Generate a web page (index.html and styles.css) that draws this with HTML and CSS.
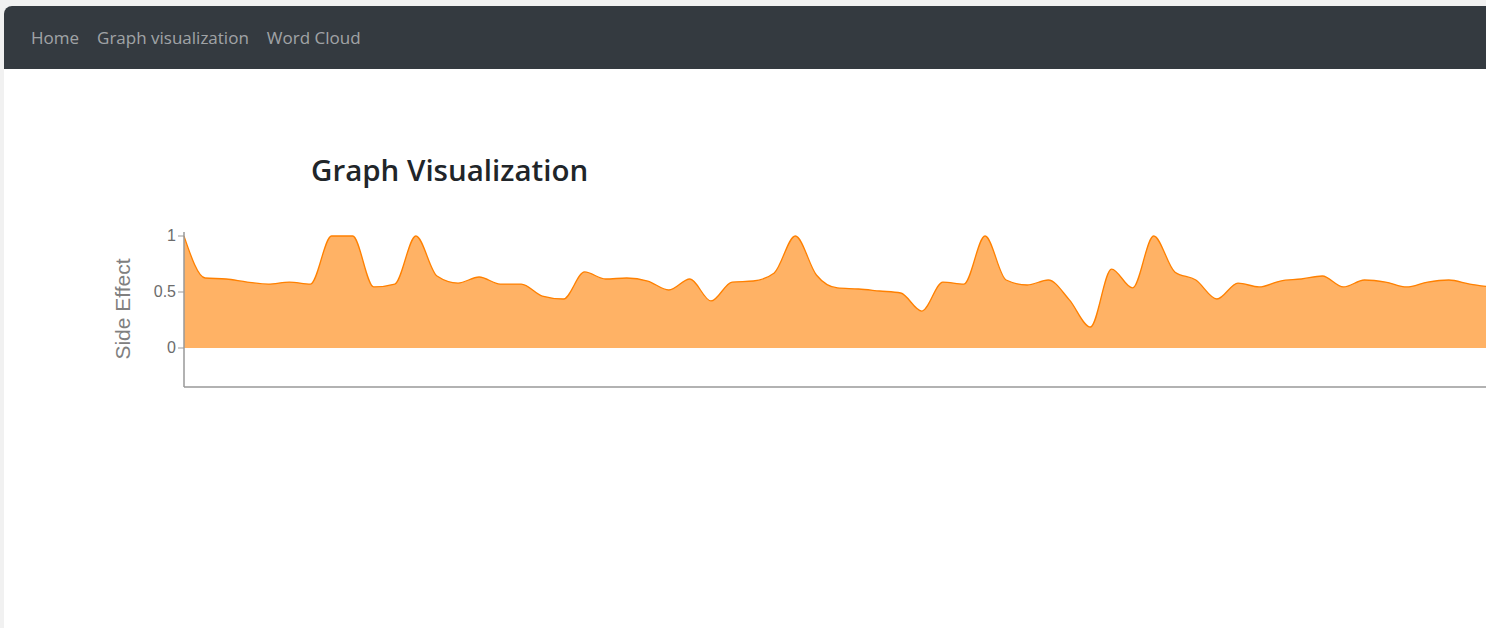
FILE: index.html
```html
<!DOCTYPE html>
<html lang="en">
<head>
<meta charset="utf-8">
<title>Graph Visualization</title>
<link rel="stylesheet" href="styles.css">
</head>
<body>
<div class="window">
  <nav class="navbar">
    <a class="nav-link" href="#">Home</a>
    <a class="nav-link" href="#">Graph visualization</a>
    <a class="nav-link" href="#">Word Cloud</a>
  </nav>
  <main class="content">
    <h2 class="title">Graph Visualization</h2>
    <svg class="chart" id="chart" width="1482" height="200">
      <g class="plot" transform="translate(180,26)">
        <path id="area" class="area" d=""></path>
        <path id="line" class="line" d=""></path>
        <line class="axis" x1="0" y1="-4" x2="0" y2="151"></line>
        <line class="axis" x1="0" y1="151" x2="1400" y2="151"></line>
        <line class="tick" x1="-6" y1="0" x2="0" y2="0"></line>
        <line class="tick" x1="-6" y1="56" x2="0" y2="56"></line>
        <line class="tick" x1="-6" y1="112" x2="0" y2="112"></line>
        <text class="tick-label" x="-8" y="0" dy="0.34em">1</text>
        <text class="tick-label" x="-8" y="56" dy="0.34em">0.5</text>
        <text class="tick-label" x="-8" y="112" dy="0.34em">0</text>
        <text class="axis-label" transform="translate(-61,73) rotate(-90)" dy="0.34em">Side Effect</text>
      </g>
    </svg>
  </main>
</div>
<script src="script.js"></script>
</body>
</html>
```

FILE: styles.css
```css
html, body {
  margin: 0;
  padding: 0;
  height: 100%;
}

body {
  background: #f1f1f1;
  font-family: "Open Sans", "Noto Sans", sans-serif;
  overflow: hidden;
}

.window {
  margin: 6px 0 0 4px;
  height: calc(100% - 6px);
  background: #ffffff;
  border-top-left-radius: 8px;
  overflow: hidden;
}

.navbar {
  height: 63px;
  background: #343a40;
  display: flex;
  align-items: center;
  padding-left: 27px;
  gap: 18px;
}

.nav-link {
  color: rgba(255, 255, 255, 0.55);
  text-decoration: none;
  font-size: 17px;
  line-height: 24px;
}

.content {
  padding-top: 82px;
}

.title {
  margin: 0 0 21px 307px;
  font-size: 29.5px;
  line-height: 38px;
  font-weight: 600;
  color: #212529;
}

.chart {
  display: block;
  overflow: hidden;
}

.area {
  fill: #ffb265;
  stroke: none;
}

.line {
  fill: none;
  stroke: #ff8000;
  stroke-width: 1.3;
}

.axis {
  stroke: #999;
  stroke-width: 1.5;
}

.tick {
  stroke: #999;
  stroke-width: 1;
}

.tick-label {
  font-family: "Liberation Sans", Arial, sans-serif;
  font-size: 16px;
  fill: #6c6c6c;
  text-anchor: end;
}

.axis-label {
  font-family: "Liberation Sans", Arial, sans-serif;
  font-size: 21px;
  fill: #808080;
  text-anchor: middle;
}
```

FILE: script.js
```js
(function () {
  var values = [
    1, 0.625, 0.616, 0.589, 0.571, 0.589, 0.571, 1, 1, 0.545,
    0.571, 1, 0.643, 0.58, 0.634, 0.571, 0.571, 0.464, 0.4375, 0.679,
    0.616, 0.625, 0.598, 0.518, 0.616, 0.42, 0.589, 0.598, 0.67, 1,
    0.652, 0.536, 0.527, 0.509, 0.491, 0.33, 0.589, 0.571, 1, 0.607,
    0.5625, 0.607, 0.43, 0.1875, 0.705, 0.536, 1, 0.679, 0.607, 0.4375,
    0.58, 0.545, 0.598, 0.616, 0.643, 0.545, 0.607, 0.589, 0.545, 0.589,
    0.607, 0.571, 0.545
  ];
  var step = 21.08;
  var scaleY = 112;
  var pts = values.map(function (v, i) {
    return [i * step, (1 - v) * scaleY];
  });

  function sign(x) { return x < 0 ? -1 : 1; }

  var n = pts.length;
  var t = new Array(n);
  for (var i = 1; i < n - 1; i++) {
    var h0 = pts[i][0] - pts[i - 1][0];
    var h1 = pts[i + 1][0] - pts[i][0];
    var s0 = (pts[i][1] - pts[i - 1][1]) / h0;
    var s1 = (pts[i + 1][1] - pts[i][1]) / h1;
    var p = (s0 * h1 + s1 * h0) / (h0 + h1);
    t[i] = (sign(s0) + sign(s1)) * Math.min(Math.abs(s0), Math.abs(s1), 0.5 * Math.abs(p)) || 0;
  }
  var hA = pts[1][0] - pts[0][0];
  t[0] = (3 * (pts[1][1] - pts[0][1]) / hA - t[1]) / 2;
  var hB = pts[n - 1][0] - pts[n - 2][0];
  t[n - 1] = (3 * (pts[n - 1][1] - pts[n - 2][1]) / hB - t[n - 2]) / 2;

  var d = "M" + pts[0][0].toFixed(2) + "," + pts[0][1].toFixed(2);
  for (var j = 0; j < n - 1; j++) {
    var x0 = pts[j][0], y0 = pts[j][1], x1 = pts[j + 1][0], y1 = pts[j + 1][1];
    var dx = (x1 - x0) / 3;
    d += "C" + (x0 + dx).toFixed(2) + "," + (y0 + dx * t[j]).toFixed(2) + "," +
      (x1 - dx).toFixed(2) + "," + (y1 - dx * t[j + 1]).toFixed(2) + "," +
      x1.toFixed(2) + "," + y1.toFixed(2);
  }
  document.getElementById("line").setAttribute("d", d);
  var area = "M0," + scaleY + "L" + d.slice(1) + "L" + pts[n - 1][0].toFixed(2) + "," + scaleY + "Z";
  document.getElementById("area").setAttribute("d", area);
})();
```
